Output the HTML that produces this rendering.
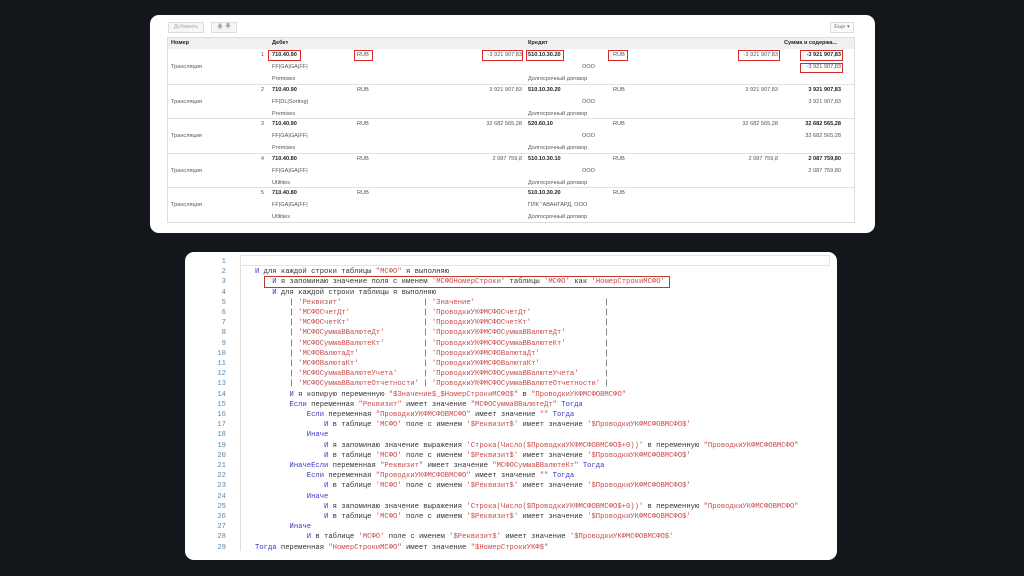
<!DOCTYPE html>
<html><head><meta charset="utf-8"><style>
*{margin:0;padding:0;box-sizing:border-box}
body{width:1024px;height:576px;overflow:hidden;background:#13161b;position:relative;font-family:"Liberation Sans","Noto Sans CJK SC",sans-serif}
.card{position:absolute;background:#fff;border-radius:9px}
.t{position:absolute;font-size:5.6px;color:#555;white-space:nowrap;line-height:7px}
.b{font-weight:bold;color:#222}
.r{text-align:right}
.box{position:absolute;border:1.5px solid #d42a2a}
.hl{position:absolute;left:0;right:0;height:1px;background:#e2e2e2}
pre{position:absolute;left:0;top:0;font-family:"Liberation Mono","DejaVu Sans Mono",monospace;font-size:7.2px;line-height:10.2px;color:#333}
.k{color:#3a3ac4}.s{color:#c94b4b}.n{color:#5a86a8}
</style></head><body>
<div class="card" style="left:150px;top:15px;width:725px;height:218px">
 <div style="position:absolute;left:18px;top:7px;width:36px;height:11px;border:1px solid #ddd;background:#f6f6f6;font-size:5.5px;color:#aaa;text-align:center;line-height:9px">Добавить</div>
 <div style="position:absolute;left:61px;top:7px;width:26px;height:11px;border:1px solid #ddd;background:#f6f6f6;font-size:6px;color:#aaa;line-height:9px;text-align:center">🡅 🡇</div>
 <div style="position:absolute;left:680px;top:7px;width:24px;height:11px;border:1px solid #ddd;background:#fafafa;font-size:5.5px;color:#777;text-align:center;line-height:9px">Еще ▾</div>
 <div id="tbl" style="position:absolute;left:17px;top:22px;width:688px;height:186px;border:1px solid #ddd;overflow:hidden"></div>
</div>
<div class="card" style="left:185px;top:252px;width:652px;height:308px;overflow:hidden">
 <div style="position:absolute;left:55px;top:3px;width:1px;height:296px;background:#ddd"></div>
 <div style="position:absolute;left:55px;top:3px;width:590px;height:11px;border:1px solid #e4e4e4"></div>
 <pre id="nums" style="left:27px;top:5px;text-align:right;width:14px" class="n"></pre>
 <pre id="code" style="left:70px;top:5px"></pre>
 <div class="box" style="left:79px;top:24px;width:406px;height:12px;border-color:#c0392b"></div>
</div>
<script>
var T=document.getElementById('tbl'),h='';
h+='<div style="position:absolute;left:0;top:0;width:100%;height:11px;background:#f0f0f0"></div>';
function t(x,y,s,c,w){return '<div class="t '+(c||'')+'" style="left:'+x+'px;top:'+y+'px;'+(w?'width:'+w+'px;':'')+'">'+s+'</div>'}
h+=t(3,2,'Номер','b')+t(104,2,'Дебет','b')+t(360,2,'Кредит','b')+t(616,2,'Сумма и содержа...','b');
var R=[['1','710.40.90','FF|GA|GA|FF|','Premises','-3 921 907,83','510.10.30.20','ООО','-3 921 907,83','-3 921 907,83','-3 921 907,83'],
['2','710.40.90','FF|DL|Sorting|','Premises','3 921 907,83','510.10.30.20','ООО','3 921 907,83','3 921 907,83','3 921 907,83'],
['3','710.40.90','FF|GA|GA|FF|','Premises','32 682 565,28','520.60.10','ООО','32 682 565,28','32 682 565,28','32 682 565,28'],
['4','710.40.80','FF|GA|GA|FF|','Utilities','2 087 759,8','510.10.30.10','ООО','2 087 759,8','2 087 759,80','2 087 759,80'],
['5','710.40.80','FF|GA|GA|FF|','Utilities','','510.10.30.20','ПЛК "АВАНГАРД, ООО','','','']];
R.forEach(function(r,i){var y=12+i*34.6;
 if(i>0)h+='<div class="hl" style="top:'+(y-1)+'px"></div>';
 h+=t(86,y+2,r[0],'r',10)+t(104,y+2,r[1],'b')+t(189,y+2,'RUB')+t(270,y+2,r[4],'r',84);
 h+=t(3,y+14,'Трансляция')+t(104,y+14,r[2])+t(104,y+26,r[3]);
 h+=t(360,y+2,r[5],'b')+t(445,y+2,'RUB')+t(526,y+2,r[7],'r',84)+t(600,y+2,r[8],'r b',73)+t(600,y+14,r[9],'r',73);
 h+=(i==4?t(360,y+14,r[6]):t(360,y+14,r[6],'r',67))+t(360,y+26,'Долгосрочный договор');
});
[[100,12,33,11],[186,12,19,11],[314,12,41,11],[358,12,38,11],[440,12,20,11],[570,12,42,11],[632,12,43,11],[632,25,43,10]].forEach(function(b){h+='<div class="box" style="left:'+b[0]+'px;top:'+b[1]+'px;width:'+b[2]+'px;height:'+b[3]+'px"></div>'});
T.innerHTML=h;
var n='';for(var i=1;i<=29;i++)n+=i+'\n';document.getElementById('nums').textContent=n;
function k(s){return '<span class="k">'+s+'</span>'}function s(x){return '<span class="s">'+x+'</span>'}
var sp=function(l){return '    '.repeat(l)};
var P=[['Реквизит','Значение'],['МСФОСчетДт','ПроводкиУКФМСФОСчетДт'],['МСФОСчетКт','ПроводкиУКФМСФОСчетКт'],['МСФОСуммаВВалютеДт','ПроводкиУКФМСФОСуммаВВалютеДт'],['МСФОСуммаВВалютеКт','ПроводкиУКФМСФОСуммаВВалютеКт'],['МСФОВалютаДт','ПроводкиУКФМСФОВалютаДт'],['МСФОВалютаКт','ПроводкиУКФМСФОВалютаКт'],['МСФОСуммаВВалютеУчета','ПроводкиУКФМСФОСуммаВВалютеУчета'],['МСФОСуммаВВалютеОтчетности','ПроводкиУКФМСФОСуммаВВалютеОтчетности']];
var L=['',
k('И')+' для каждой строки таблицы '+s('"МСФО"')+' я выполняю',
sp(1)+k('И')+' я запоминаю значение поля с именем '+s("'МСФОНомерСтроки'")+' таблицы '+s("'МСФО'")+' как '+s("'НомерСтрокиМСФО'"),
sp(1)+k('И')+' для каждой строки таблицы я выполняю'];
P.forEach(function(p){var a="'"+p[0]+"'",b="'"+p[1]+"'";L.push(sp(2)+'| '+s(a)+' '.repeat(29-a.length)+'| '+s(b)+' '.repeat(40-b.length)+'|')});
var V="'$ПроводкиУКФМСФОВМСФО$'";
L=L.concat([
sp(2)+k('И')+' я копирую переменную '+s('"$Значение$_$НомерСтрокиМСФО$"')+' в '+s('"ПроводкиУКФМСФОВМСФО"'),
sp(2)+k('Если')+' переменная '+s('"Реквизит"')+' имеет значение '+s('"МСФОСуммаВВалютеДт"')+' '+k('Тогда'),
sp(3)+k('Если')+' переменная '+s('"ПроводкиУКФМСФОВМСФО"')+' имеет значение '+s('""')+' '+k('Тогда'),
sp(4)+k('И')+' в таблице '+s("'МСФО'")+' поле с именем '+s("'$Реквизит$'")+' имеет значение '+s(V),
sp(3)+k('Иначе'),
sp(4)+k('И')+' я запоминаю значение выражения '+s("'Строка(Число($ПроводкиУКФМСФОВМСФО$+0))'")+' в переменную '+s('"ПроводкиУКФМСФОВМСФО"'),
sp(4)+k('И')+' в таблице '+s("'МСФО'")+' поле с именем '+s("'$Реквизит$'")+' имеет значение '+s(V),
sp(2)+k('ИначеЕсли')+' переменная '+s('"Реквизит"')+' имеет значение '+s('"МСФОСуммаВВалютеКт"')+' '+k('Тогда'),
sp(3)+k('Если')+' переменная '+s('"ПроводкиУКФМСФОВМСФО"')+' имеет значение '+s('""')+' '+k('Тогда'),
sp(4)+k('И')+' в таблице '+s("'МСФО'")+' поле с именем '+s("'$Реквизит$'")+' имеет значение '+s(V),
sp(3)+k('Иначе'),
sp(4)+k('И')+' я запоминаю значение выражения '+s("'Строка(Число($ПроводкиУКФМСФОВМСФО$+0))'")+' в переменную '+s('"ПроводкиУКФМСФОВМСФО"'),
sp(4)+k('И')+' в таблице '+s("'МСФО'")+' поле с именем '+s("'$Реквизит$'")+' имеет значение '+s(V),
sp(2)+k('Иначе'),
sp(3)+k('И')+' в таблице '+s("'МСФО'")+' поле с именем '+s("'$Реквизит$'")+' имеет значение '+s(V),
k('Тогда')+' переменная '+s('"НомерСтрокиМСФО"')+' имеет значение '+s('"$НомерСтрокиУКФ$"')]);
document.getElementById('code').innerHTML=L.join('\n');
</script>
</body></html>
